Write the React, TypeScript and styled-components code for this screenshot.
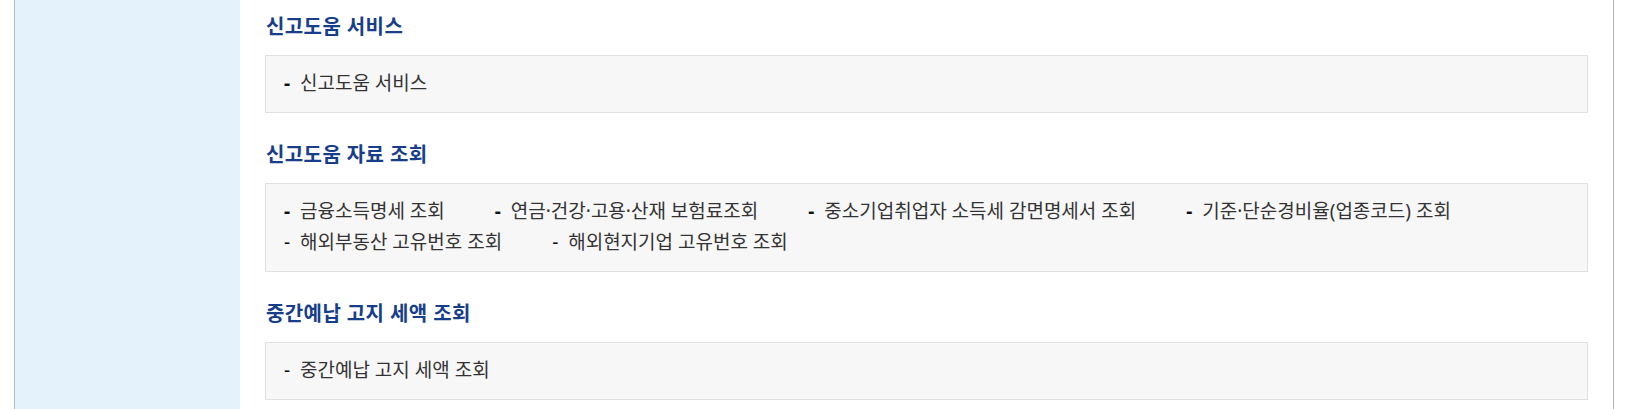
import React from "react";
import styled, { createGlobalStyle } from "styled-components";

const GlobalStyle = createGlobalStyle`
  html, body {
    margin: 0;
    padding: 0;
    background: #ffffff;
  }
  body {
    font-family: "Noto Sans", "Noto Sans CJK KR", sans-serif;
    color: #333333;
  }
`;

const Frame = styled.div`
  display: flex;
  margin: 0 14px;
  min-height: 409px;
  border-left: 1px solid #a9c0d2;
  border-right: 1px solid #a9b4bd;
`;

const Side = styled.aside`
  width: 225px;
  flex-shrink: 0;
  background: #e4f3fb;
`;

const Main = styled.main`
  flex: 1;
  padding: 15px 25px 0 25px;
`;

const Section = styled.section`
  margin-bottom: 30px;

  &:last-child {
    margin-bottom: 0;
  }
`;

const Title = styled.h3`
  margin: 0 0 16px 1px;
  font-size: 20px;
  line-height: 24px;
  font-weight: 700;
  letter-spacing: 0.4px;
  color: #173e8a;
`;

const Box = styled.ul`
  margin: 0;
  padding: 12px 18px 13px 18px;
  list-style: none;
  background: #f7f7f7;
  border: 1px solid #e1e1e1;
  display: flex;
  flex-wrap: wrap;
`;

const Item = styled.li<{ $strong?: boolean }>`
  font-size: 19px;
  line-height: 31px;
  color: #333333;
  margin-right: 50px;
  white-space: nowrap;

  &::before {
    content: "-";
    display: inline-block;
    width: 16px;
    color: #111111;
    font-weight: ${(p) => (p.$strong ? 700 : 400)};
  }
`;

const Break = styled.li`
  flex-basis: 100%;
  height: 0;
`;

type Entry = { label: string; strong?: boolean };

const sections: { title: string; items: Entry[] }[] = [
  {
    title: "신고도움 서비스",
    items: [{ label: "신고도움 서비스", strong: true }],
  },
  {
    title: "신고도움 자료 조회",
    items: [
      { label: "금융소득명세 조회", strong: true },
      { label: "연금·건강·고용·산재 보험료조회", strong: true },
      { label: "중소기업취업자 소득세 감면명세서 조회", strong: true },
      { label: "기준·단순경비율(업종코드) 조회", strong: true },
      { label: "해외부동산 고유번호 조회" },
      { label: "해외현지기업 고유번호 조회" },
    ],
  },
  {
    title: "중간예납 고지 세액 조회",
    items: [{ label: "중간예납 고지 세액 조회" }],
  },
];

export default function App() {
  return (
    <>
      <GlobalStyle />
      <Frame>
        <Side />
        <Main>
          {sections.map((s) => (
            <Section key={s.title}>
              <Title>{s.title}</Title>
              <Box>
                {s.items.map((it, i) => (
                  <React.Fragment key={it.label}>
                    {i === 4 && <Break />}
                    <Item $strong={it.strong}>{it.label}</Item>
                  </React.Fragment>
                ))}
              </Box>
            </Section>
          ))}
        </Main>
      </Frame>
    </>
  );
}
